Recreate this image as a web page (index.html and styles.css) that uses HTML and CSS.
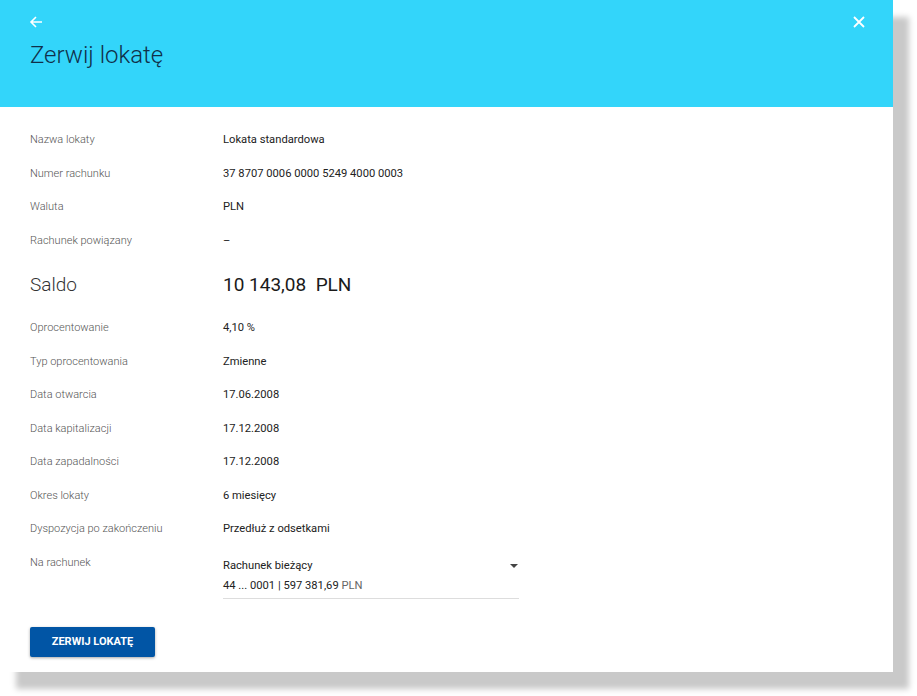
FILE: index.html
```html
<!DOCTYPE html>
<html lang="pl">
<head>
<meta charset="utf-8">
<link rel="stylesheet" href="styles.css">
</head>
<body>
<div class="panel">
  <header class="header">
    <div class="header-top">
      <svg class="icon" width="14" height="14" viewBox="0 0 14 14"><path d="M13 7H2M7 2L2 7l5 5" fill="none" stroke="#fff" stroke-width="1.6"/></svg>
      <svg class="icon" width="14" height="14" viewBox="0 0 14 14"><path d="M2 2l10 10M12 2L2 12" fill="none" stroke="#fff" stroke-width="1.8"/></svg>
    </div>
    <h1 class="title">Zerwij lokatę</h1>
  </header>
  <main class="content">
    <div class="row"><span class="label">Nazwa lokaty</span><span class="value">Lokata standardowa</span></div>
    <div class="row"><span class="label">Numer rachunku</span><span class="value">37 8707 0006 0000 5249 4000 0003</span></div>
    <div class="row"><span class="label">Waluta</span><span class="value">PLN</span></div>
    <div class="row"><span class="label">Rachunek powiązany</span><span class="value">–</span></div>
    <div class="row saldo"><span class="label">Saldo</span><span class="value">10 143,08&nbsp; PLN</span></div>
    <div class="row"><span class="label">Oprocentowanie</span><span class="value">4,10 %</span></div>
    <div class="row"><span class="label">Typ oprocentowania</span><span class="value">Zmienne</span></div>
    <div class="row"><span class="label">Data otwarcia</span><span class="value">17.06.2008</span></div>
    <div class="row"><span class="label">Data kapitalizacji</span><span class="value">17.12.2008</span></div>
    <div class="row"><span class="label">Data zapadalności</span><span class="value">17.12.2008</span></div>
    <div class="row"><span class="label">Okres lokaty</span><span class="value">6 miesięcy</span></div>
    <div class="row"><span class="label">Dyspozycja po zakończeniu</span><span class="value">Przedłuż z odsetkami</span></div>
    <div class="row select-row">
      <span class="label">Na rachunek</span>
      <div class="select">
        <div class="select-main"><span>Rachunek bieżący</span><span class="caret"></span></div>
        <div class="select-sub">44 ... 0001 | 597 381,69 <span class="cur">PLN</span></div>
      </div>
    </div>
    <button class="btn">ZERWIJ LOKATĘ</button>
  </main>
</div>
</body>
</html>
```
FILE: styles.css
```css
html, body { margin: 0; padding: 0; background: #fff; }
body { font-family: Roboto, "Noto Sans", sans-serif; width: 917px; height: 696px; overflow: hidden; }
.panel {
  width: 893px;
  height: 672px;
  background: #fff;
  box-shadow: 16px 17px 6px #c9c9c9;
}
.header {
  background: #33d5fa;
  height: 107px;
  box-sizing: border-box;
  padding: 15px 27px 0 29px;
}
.header-top { display: flex; justify-content: space-between; height: 14px; }
.title {
  margin: 11px 0 0 1px;
  font-weight: 300;
  font-size: 24px;
  line-height: 30px;
  color: #10304a;
}
.content { padding: 16px 30px 0 30px; }
.row {
  display: flex;
  align-items: center;
  height: 33.5px;
  font-size: 11.2px;
}
.label { width: 193px; flex: none; color: #555; font-size: 11px; font-weight: 300; }
.value { color: #222; }
.saldo { height: 54px; }
.saldo .label { font-size: 19px; font-weight: 300; color: #333; }
.saldo .value { font-size: 19px; color: #1a1a1a; }
.select-row { align-items: flex-start; height: auto; padding-top: 9px; }
.select-row .label { padding-top: 1px; }
.select { width: 296px; border-bottom: 1px solid #ddd; padding-bottom: 4px; color: #222; }
.select-main { display: flex; justify-content: space-between; align-items: center; height: 16px; padding-top: 3px; }
.caret { width: 0; height: 0; border-left: 4px solid transparent; border-right: 4px solid transparent; border-top: 4px solid #444; margin-right: 1px; }
.select-sub { margin-top: 4px; height: 16px; line-height: 16px; }
.cur { color: #666; }
.btn {
  margin-top: 28px;
  width: 125px;
  height: 30px;
  border: none;
  border-radius: 2px;
  background: #0155a5;
  color: #fff;
  font-family: Roboto, sans-serif;
  font-weight: 700;
  font-size: 11px;
  box-shadow: 0 1px 3px rgba(0,0,0,0.35);
  padding: 0;
}
```
